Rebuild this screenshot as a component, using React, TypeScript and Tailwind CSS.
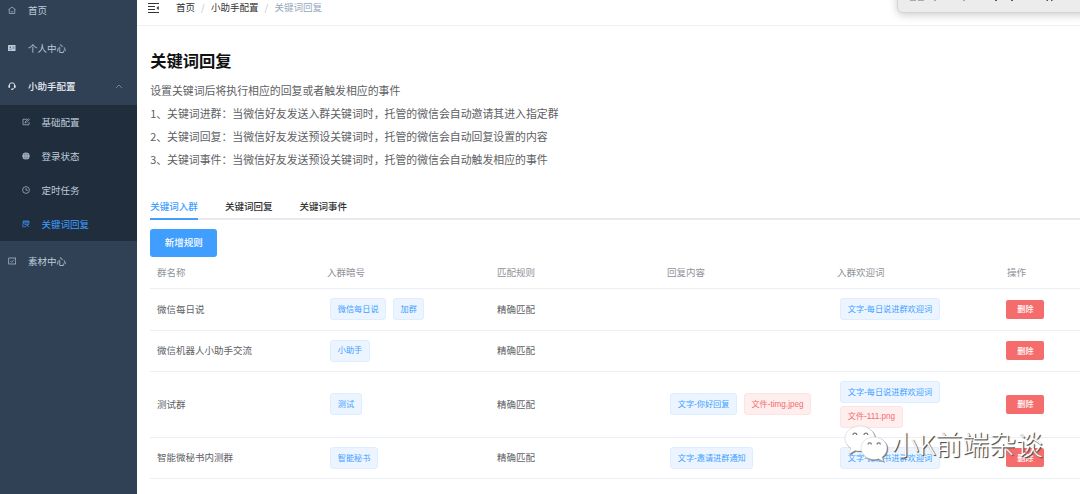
import type { ReactNode } from 'react';

type TagKind = 'blue' | 'red';
interface Tag {
  text: string;
  kind?: TagKind;
}
interface Rule {
  name: string;
  height: string;
  keys: Tag[];
  reply: Tag[];
  welcome: Tag[];
}

const rules: Rule[] = [
  { name: '微信每日说', height: 'h-[41.5px]', keys: [{ text: '微信每日说' }, { text: '加群' }], reply: [], welcome: [{ text: '文字-每日说进群欢迎词' }] },
  { name: '微信机器人小助手交流', height: 'h-[41.3px]', keys: [{ text: '小助手' }], reply: [], welcome: [] },
  {
    name: '测试群',
    height: 'h-[66px]',
    keys: [{ text: '测试' }],
    reply: [{ text: '文字-你好回复' }, { text: '文件-timg.jpeg', kind: 'red' }],
    welcome: [{ text: '文字-每日说进群欢迎词' }, { text: '文件-111.png', kind: 'red' }],
  },
  { name: '智能微秘书内测群', height: 'h-[41.2px]', keys: [{ text: '智能秘书' }], reply: [{ text: '文字-邀请进群通知' }], welcome: [{ text: '文字-微秘书进群欢迎词' }] },
];

const headers = ['群名称', '入群暗号', '匹配规则', '回复内容', '入群欢迎词', '操作'];
const columns = 'grid grid-cols-[170px_170px_170px_170px_170px_1fr]';

function Glyph({ children }: { children: ReactNode }) {
  return (
    <svg viewBox="0 0 16 16" className="size-2 shrink-0" fill="none" stroke="currentColor" strokeWidth="1.3">
      {children}
    </svg>
  );
}

const icons = {
  home: (
    <Glyph>
      <path d="M1 7.500 8 2l7 5.500M2.500 6.500V15h11V6.500M5.500 11.500h5" />
    </Glyph>
  ),
  card: (
    <Glyph>
      <rect x="0" y="2" width="15" height="12" rx="1" fill="currentColor" stroke="none" />
      <path d="M2.500 10.500h5M9 6h4M9 8.500h4" stroke="#304156" strokeWidth="1" />
      <circle cx="4.500" cy="6.500" r="1.300" fill="#304156" stroke="none" />
    </Glyph>
  ),
  headset: (
    <Glyph>
      <path d="M2.500 9V7a5.500 5.500 0 0 1 11 0v2c0 3-2 5-5 5" strokeWidth="1.800" />
      <path d="M2.500 6.500v5M13.500 6.500v5" strokeWidth="3.200" />
      <path d="M6 14.500h4" strokeWidth="2" />
    </Glyph>
  ),
  edit: (
    <Glyph>
      <path d="M10 2.500H2v11h12V8M6 10l1-3 6-5.500 1.600 1.600-6 6z" />
    </Glyph>
  ),
  globe: (
    <Glyph>
      <circle cx="8" cy="8" r="7.200" fill="currentColor" stroke="none" />
      <path d="M1 5.500h14M1 10.500h14M8 1v14" stroke="#1f2d3d" strokeWidth=".6" />
      <ellipse cx="8" cy="8" rx="3.500" ry="7" stroke="#1f2d3d" strokeWidth=".6" />
    </Glyph>
  ),
  clock: (
    <Glyph>
      <circle cx="8" cy="8" r="6.800" />
      <path d="M8 4v4.500h3.500" />
    </Glyph>
  ),
  reply: (
    <Glyph>
      <path d="M14 7V2H2.500L1.500 13.500H8M2 6h12M5 9h3M2 3.500h12" />
      <path d="m9.500 9 4.500 5M9.500 13V9H14" />
    </Glyph>
  ),
  material: (
    <Glyph>
      <rect x="1.500" y="2" width="14" height="12" />
      <path d="m5 8.500 2 2 5-5" />
    </Glyph>
  ),
};

function MenuItem({ icon, label, className = '' }: { icon: ReactNode; label: string; className?: string }) {
  return (
    <div className={`flex h-[37.8px] shrink-0 items-center gap-3 pl-2 text-[#bfcbd9] ${className}`}>
      {icon}
      <span className="pt-[1.5px]">{label}</span>
    </div>
  );
}

function SubItem({ icon, label, active = false }: { icon: ReactNode; label: string; active?: boolean }) {
  return (
    <div className={`flex h-[34px] items-center gap-[11.5px] pl-[22px] ${active ? 'text-[#409eff]' : 'text-[#bfcbd9]'}`}>
      {icon}
      <span className="pt-[2px]">{label}</span>
    </div>
  );
}

function TagList({ tags }: { tags: Tag[] }) {
  return (
    <div className="flex flex-wrap content-center items-center gap-x-[6.8px] gap-y-[2.5px] pl-[10px] font-['Liberation_Sans','Noto_Sans_CJK_SC',sans-serif]">
      {tags.map((tag) => (
        <span
          key={tag.text}
          className={`flex h-[22px] items-center rounded-[3px] border px-[6.6px] pt-[1.5px] text-[8.16px] whitespace-nowrap ${
            tag.kind === 'red' ? 'border-[#fde4e4] bg-[#ffeeee] text-[#f56c6c]' : 'border-[#dceeff] bg-[#ecf5ff] text-[#409eff]'
          }`}
        >
          {tag.text}
        </span>
      ))}
    </div>
  );
}

function Sidebar() {
  return (
    <aside className="flex w-[136.5px] shrink-0 flex-col bg-[#304156] text-[9.5px]">
      <MenuItem icon={icons.home} label="首页" className="-mt-[9px] mb-[0.6px]" />
      <MenuItem icon={icons.card} label="个人中心" />
      <div className="flex items-center justify-between pr-[13.5px]">
        <MenuItem icon={icons.headset} label="小助手配置" className="font-medium text-[#e8ebef]" />
        <svg viewBox="0 0 8 5" className="h-[5px] w-2" fill="none" stroke="#8792a0" strokeWidth=".8">
          <path d="m1 4 3-3 3 3" />
        </svg>
      </div>
      <div className="bg-[#1f2d3d]">
        <SubItem icon={icons.edit} label="基础配置" />
        <SubItem icon={icons.globe} label="登录状态" />
        <SubItem icon={icons.clock} label="定时任务" />
        <SubItem icon={icons.reply} label="关键词回复" active />
      </div>
      <MenuItem icon={icons.material} label="素材中心" className="pt-[1.5px]" />
    </aside>
  );
}

/* Floating panel that hangs over the top edge, with the feet of its cut-off caption. */
function FloatingPanel() {
  return (
    <div className="absolute -top-4 -right-2 h-[29px] w-[191px] rounded-[6px] border border-[#d4d4d4] bg-[#ececec] pt-[15px] shadow-[0_2px_8px_rgba(0,0,0,0.2)]">
      <svg viewBox="0 0 180 2" className="h-[2px] w-[180px]">
        <path d="M12 .5h6M20 .5h6M36 .5h2M65 .5h2" stroke="#aaa" />
        <path d="M97 .5h2M113 .5h2M148.500 .5h1.500M153 .5h1.500" stroke="#555" />
      </svg>
    </div>
  );
}

function Watermark() {
  return (
    <div className="absolute top-[425px] left-[844px] flex items-start">
      <svg viewBox="0 0 46 38" className="h-[38px] w-[46px] drop-shadow-[1px_1px_0.500px_#777]" fill="white" stroke="#bbb" strokeWidth=".4">
        <path d="M16 1C7.500 1 1 6.500 1 13.500c0 4 2.200 7.500 5.800 9.800L5 29l6.200-3.500c1.500.4 3.200.5 4.800.5 8.400 0 15-5.600 15-12.500S24.400 1 16 1z" />
        <path d="M30 12c-7.400 0-13 5-13 11s5.600 11.500 13 11.500c1.600 0 3.200-.3 4.600-.7l4.900 2.700-1.500-4.400C41 30.200 43 26.900 43 23c0-6-5.700-11-13-11z" />
        <g fill="none" stroke="#777" strokeWidth="1.200">
          <path d="M9 10a1.900 1.900 0 0 1 3.800 0M20 10a1.900 1.900 0 0 1 3.800 0M24 19.500a1.700 1.700 0 0 1 3.400 0M33 19.500a1.700 1.700 0 0 1 3.400 0" />
        </g>
      </svg>
      <span className="ml-[2px] text-[26.800px] leading-[38px] font-light whitespace-nowrap text-white [text-shadow:1px_1px_1px_#444,1px_1px_0_#999]">小K前端杂谈</span>
    </div>
  );
}

export default function App() {
  return (
    <div className="relative flex h-[494px] w-[1080px] overflow-hidden bg-white font-['Noto_Sans_CJK_SC',sans-serif] leading-none text-[#606266]">
      <Sidebar />
      <main className="flex min-w-0 flex-1 flex-col">
        <header className="flex h-[26px] shrink-0 items-start border-b border-[#f0f0f2] pl-[11.500px] text-[9.500px]">
          <svg viewBox="0 0 11 10" className="mt-[3px] mr-[17px] h-[10px] w-[11px]" fill="none" stroke="#333" strokeWidth="1">
            <path d="M0 .5h11M0 3.500h7M0 6.500h7M0 9.500h11" />
            <path d="M10.800 3v4L8.300 5z" fill="#333" stroke="none" />
          </svg>
          <nav className="flex items-center gap-[6.100px] pt-[3px]">
            <span className="text-[#303133]">首页</span>
            <span className="text-[#c0c4cc]">/</span>
            <span className="text-[#303133]">小助手配置</span>
            <span className="text-[#c0c4cc]">/</span>
            <span className="text-[#97a8be]">关键词回复</span>
          </nav>
        </header>
        <div className="flex flex-col pl-[13.700px]">
          <h1 className="mt-[26px] h-[17px] text-[16.300px] leading-[17px] font-bold text-[#111]">关键词回复</h1>
          <div className="mt-[10px] text-[10.880px] leading-[23.120px] text-[#5e6063]">
            <p>设置关键词后将执行相应的回复或者触发相应的事件</p>
            <p>1、关键词进群：当微信好友发送入群关键词时，托管的微信会自动邀请其进入指定群</p>
            <p>2、关键词回复：当微信好友发送预设关键词时，托管的微信会自动回复设置的内容</p>
            <p>3、关键词事件：当微信好友发送预设关键词时，托管的微信会自动触发相应的事件</p>
          </div>
          <div className="mt-[21px] flex h-[27.500px] gap-[27.200px] border-b-2 border-[#e8eaf0] text-[9.500px] font-medium text-[#303133]">
            <span className="h-[27px] border-b-2 border-[#409eff] pt-[9px] text-[#409eff]">关键词入群</span>
            <span className="pt-[9px]">关键词回复</span>
            <span className="pt-[9px]">关键词事件</span>
          </div>
          <button className="mt-[9px] flex h-[27.500px] w-[67px] items-center justify-center rounded-[3px] bg-[#409eff] text-[9.500px] font-medium text-white">新增规则</button>
          <section className="text-[9.500px]">
            <div className={`${columns} h-[32.500px] items-center border-b border-[#ebeef5] pt-px text-[#909399]`}>
              {headers.map((header) => (
                <span key={header} className="pl-[6.800px]">
                  {header}
                </span>
              ))}
            </div>
            {rules.map((rule) => (
              <div key={rule.name} className={`${columns} ${rule.height} items-center border-b border-[#ebeef5]`}>
                <span className="pl-[6.800px]">{rule.name}</span>
                <TagList tags={rule.keys} />
                <span className="pl-[6.800px]">精确匹配</span>
                <TagList tags={rule.reply} />
                <TagList tags={rule.welcome} />
                <button className="ml-[6.300px] flex h-[19px] w-[38px] items-center justify-center rounded-[2px] bg-[#f56c6c] text-[8.160px] font-medium text-white">删除</button>
              </div>
            ))}
          </section>
        </div>
      </main>
      <FloatingPanel />
      <Watermark />
    </div>
  );
}
